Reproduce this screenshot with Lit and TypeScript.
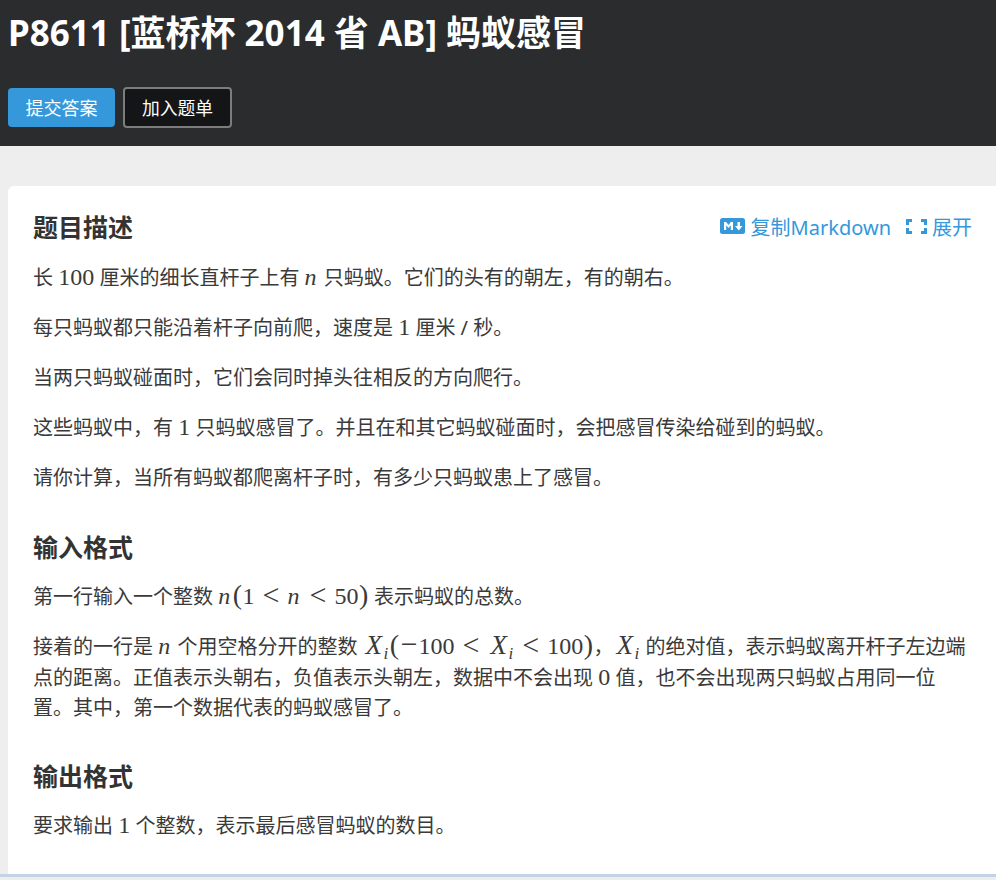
import { LitElement, html, css } from "lit";
import { customElement } from "lit/decorators.js";

const v = (s: string) => html`<i class="mi">${s}</i>`;
const n = (s: string) => html`<span class="mn">${s}</span>`;
const paren = (s: string) => html`<span class="mo paren">${s}</span>`;
const lt = html`<span class="mo rel">&lt;</span>`;
const Xi = html`<span class="mx">${v("X")}<sub class="sub">${v("i")}</sub></span>`;

@customElement("app-root")
export class AppRoot extends LitElement {
  static styles = css`
    :host { display: block; height: 880px; overflow: hidden; background: #eeeeee; font-family: "Noto Sans", "Noto Sans CJK SC", sans-serif; color: #333; }
    .banner { height: 146px; box-sizing: border-box; background: #2b2c2e; padding: 8px 8px 0; }
    h1 { margin: 0; color: #fff; font-size: 35px; line-height: 50px; font-weight: 700; }
    .actions { display: flex; gap: 8px; margin-top: 29px; align-items: center; }
    .btn { box-sizing: border-box; height: 39px; padding-bottom: 2px; border-radius: 4px; color: #fff; font-size: 18px; display: flex; align-items: center; justify-content: center; }
    .primary { width: 107px; background: #3498db; }
    .dark { width: 109px; height: 41px; background: #141516; border: 2px solid #7d7d7d; font-size: 17.8px; }
    .card { margin: 40px 0 0 8px; height: 691px; box-sizing: border-box; background: #fff; border-radius: 6px 0 0 0; padding: 21px 25px 0; }
    .head { display: flex; justify-content: space-between; align-items: center; height: 40px; }
    h2 { margin: 0; font-size: 25px; line-height: 40px; font-weight: 700; color: #333; }
    .section { margin-top: 34px; }
    .section.last { margin-top: 32px; }
    p { margin: 19.6px 0 0; font-size: 20px; line-height: 30.4px; color: #3a3a3a; }
    .head + p { margin-top: 16px; }
    h2 + p { margin-top: 15px; }
    .tools { display: flex; align-items: center; color: #3498db; font-size: 20px; margin-top: -2px; }
    .tools svg { display: block; margin-right: 4px; }
    .tools svg.md { margin-right: 5px; }
    .tools span { position: relative; left: 1px; }
    .tools .gap { margin-left: 16px; }
    .mi, .mn, .mo { font-family: "Liberation Serif", "DejaVu Serif", serif; font-size: 24px; line-height: 0; }
    .mi { font-style: italic; padding-right: 2px; }
    .mo { padding: 0 1px; }
    .mo.paren { font-size: 28px; font-weight: 400; padding: 0 0.5px; }
    .mo.rel { font-size: 30px; padding: 0 8px; position: relative; top: 1px; }
    .mo.minus { font-size: 30px; padding: 0 1px; }
    .mx { white-space: nowrap; padding-left: 3px; }
    .mx > .mi { font-size: 27px; padding-right: 1.5px; }
    .sub { font-size: 0; vertical-align: -5px; line-height: 0; }
    .sub .mi { font-size: 17px; padding-right: 1px; }
    .bottom { height: 3px; background: #c4d2e6; margin-top: -3px; position: relative; }
  `;

  render() {
    return html`
      <div class="banner">
        <h1>P8611 [蓝桥杯 2014 省 AB] 蚂蚁感冒</h1>
        <div class="actions">
          <div class="btn primary">提交答案</div>
          <div class="btn dark">加入题单</div>
        </div>
      </div>
      <div class="card">
        <div class="head">
          <h2>题目描述</h2>
          <div class="tools">
            <svg class="md" width="25" height="16" viewBox="0 0 25 16"><rect width="25" height="16" rx="2.5" fill="#3498db"/><path d="M4 12V4h2.2l2.3 3 2.300-3H13v8h-2.200V7.200L8.500 10 6.200 7.200V12zM17.500 4h2.500v4h2.500l-3.700 4.500L15 8h2.500z" fill="#fff"/></svg>
            <span>复制Markdown</span>
            <svg class="gap" width="21" height="15" viewBox="0 0 21 15"><path d="M6 1.500H1.500V6M15 1.500h4.500V6M6 13.500H1.500V9M15 13.500h4.500V9" fill="none" stroke="#3498db" stroke-width="3"/></svg>
            <span>展开</span>
          </div>
        </div>
        <p>长 ${n("100")} 厘米的细长直杆子上有 ${v("n")} 只蚂蚁。它们的头有的朝左，有的朝右。</p>
        <p>每只蚂蚁都只能沿着杆子向前爬，速度是 ${n("1")} 厘米 / 秒。</p>
        <p>当两只蚂蚁碰面时，它们会同时掉头往相反的方向爬行。</p>
        <p>这些蚂蚁中，有 ${n("1")} 只蚂蚁感冒了。并且在和其它蚂蚁碰面时，会把感冒传染给碰到的蚂蚁。</p>
        <p>请你计算，当所有蚂蚁都爬离杆子时，有多少只蚂蚁患上了感冒。</p>
        <div class="section">
          <h2>输入格式</h2>
          <p>第一行输入一个整数 ${v("n")}${paren("(")}${n("1")}${lt}${v("n")}${lt}${n("50")}${paren(")")} 表示蚂蚁的总数。</p>
          <p>接着的一行是 ${v("n")} 个用空格分开的整数 ${Xi}${paren("(")}<span class="mo minus">−</span>${n("100")}${lt}${Xi}${lt}${n("100")}${paren(")")}，${Xi} 的绝对值，表示蚂蚁离开杆子左边端点的距离。正值表示头朝右，负值表示头朝左，数据中不会出现 ${n("0")} 值，也不会出现两只蚂蚁占用同一位置。其中，第一个数据代表的蚂蚁感冒了。</p>
        </div>
        <div class="section last">
          <h2>输出格式</h2>
          <p>要求输出 ${n("1")} 个整数，表示最后感冒蚂蚁的数目。</p>
        </div>
      </div>
      <div class="bottom"></div>
    `;
  }
}
